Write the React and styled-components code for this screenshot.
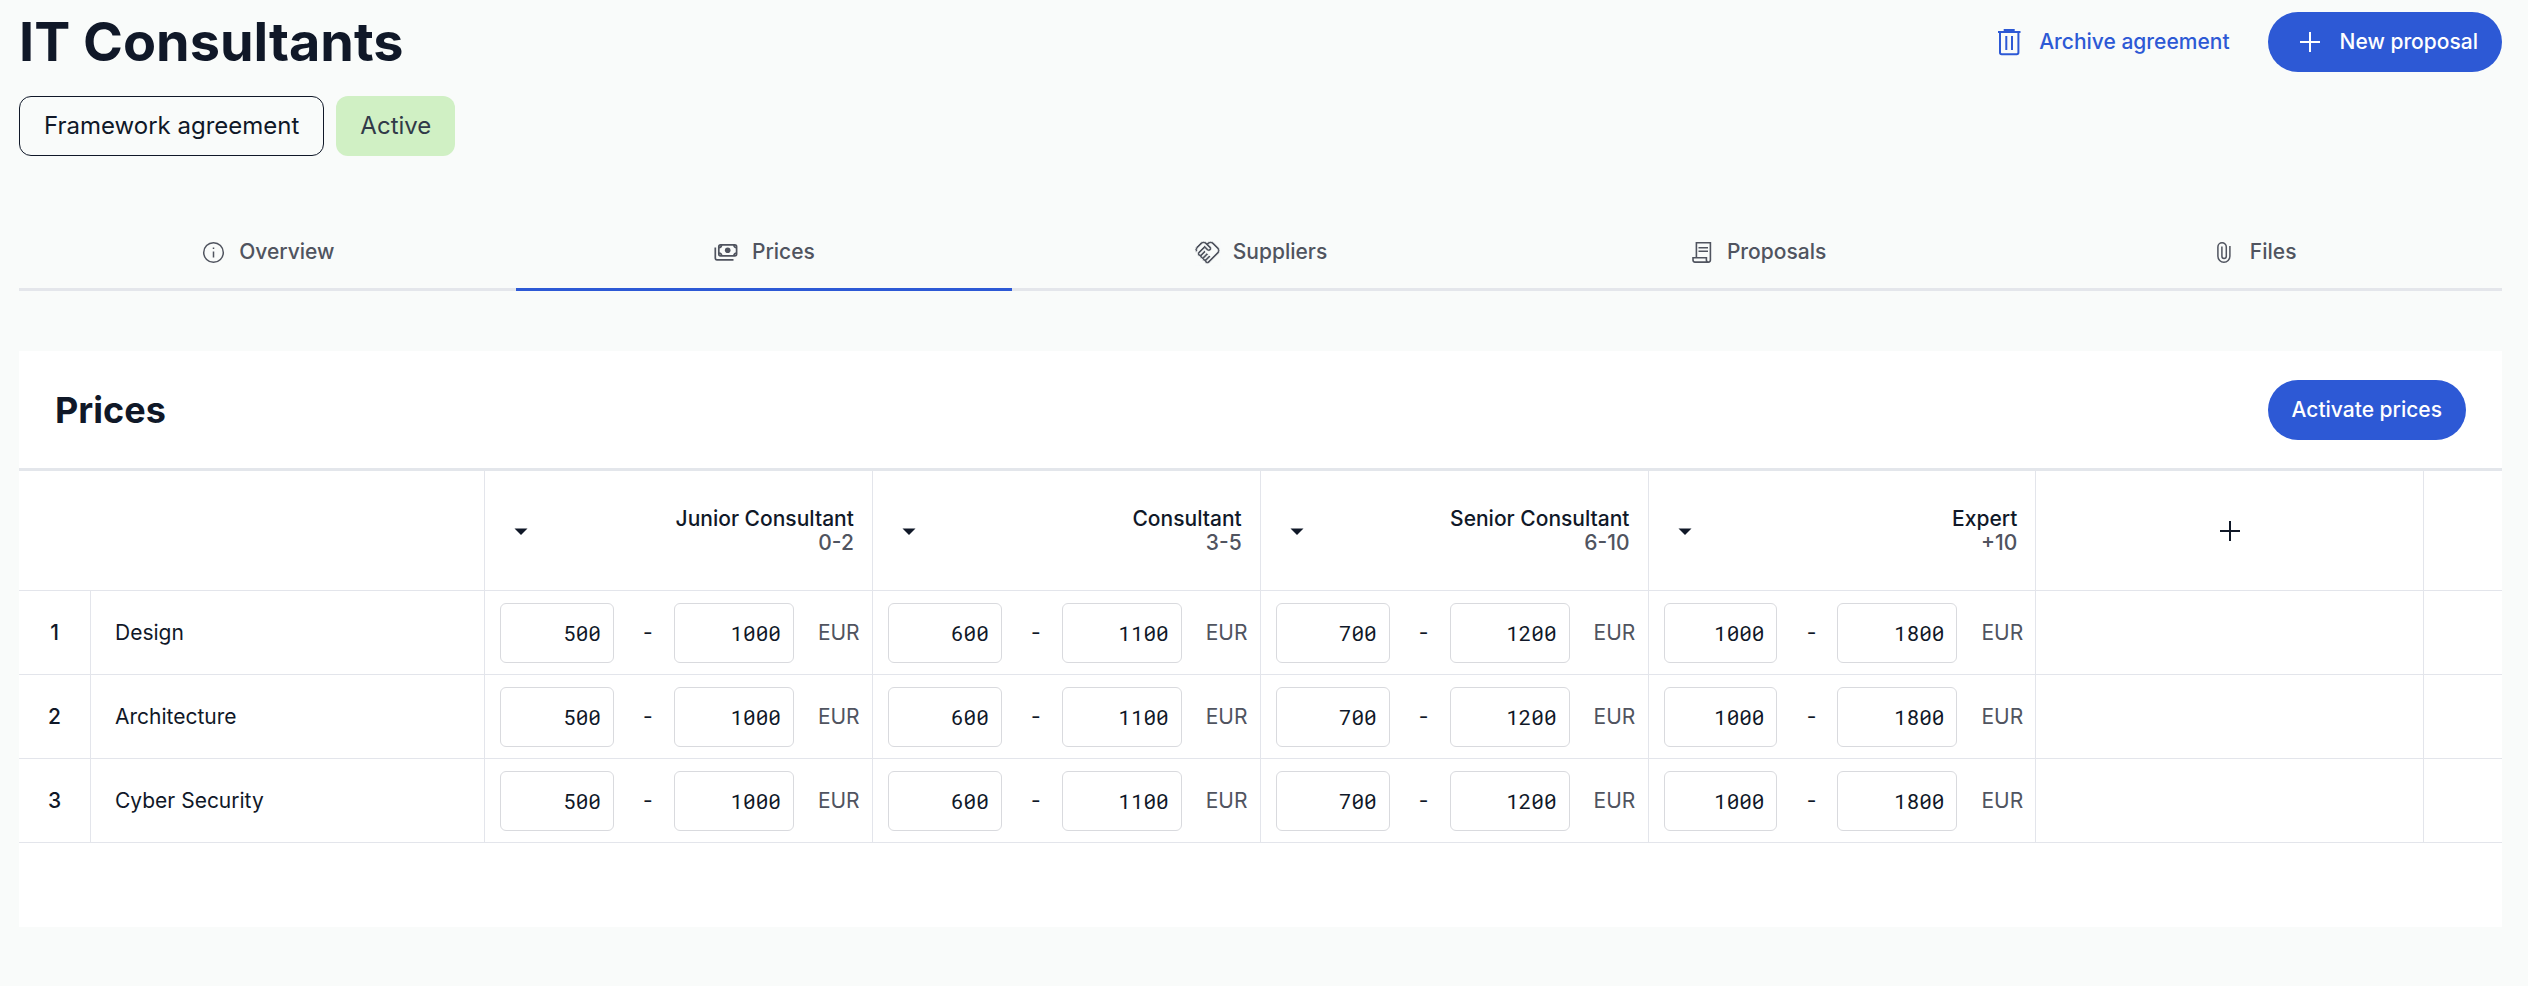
import { useState } from "react";
import styled, { createGlobalStyle } from "styled-components";
import { MdOutlineHandshake } from "react-icons/md";

const GlobalStyle = createGlobalStyle`
  * {
    box-sizing: border-box;
  }

  body {
    margin: 0;
    background-color: #f9fbfa;
    color: #101828;
    font-family: Inter, "Liberation Sans", sans-serif;
    font-size: 21px;
    line-height: 24px;
  }
`;

const Container = styled.main`
  display: flex;
  flex-direction: column;
  padding: 12px 26px 48px 19px;
`;

const Header = styled.header`
  display: flex;
  justify-content: space-between;
  align-items: center;
`;

const Title = styled.h1`
  margin: 0;
  font-size: 54px;
  line-height: 60px;
  font-weight: 700;
`;

const Actions = styled.div`
  display: flex;
  gap: 14px;
`;

const Button = styled.button`
  display: flex;
  align-items: center;
  gap: 12px;
  height: 60px;
  padding: 0 24px;
  border: none;
  border-radius: 30px;
  background-color: ${(p) => (p.$primary ? "#2d59d5" : "transparent")};
  color: ${(p) => (p.$primary ? "#ffffff" : "#2d59d5")};
  font: inherit;
  font-weight: 500;
  cursor: pointer;
`;

const Tags = styled.div`
  display: flex;
  gap: 12px;
  margin-top: 24px;
`;

const Tag = styled.span`
  display: flex;
  align-items: center;
  height: 60px;
  padding: 0 24px;
  border: ${(p) => (p.$active ? "none" : "1px solid #101828")};
  border-radius: 12px;
  background-color: ${(p) => (p.$active ? "#d0f0c4" : "transparent")};
  color: ${(p) => (p.$active ? "#303a48" : "#101828")};
  font-size: 24px;
`;

const Tabs = styled.nav`
  display: flex;
  margin: 60px 0;
`;

const Tab = styled.a`
  flex: 1;
  display: flex;
  justify-content: center;
  align-items: center;
  gap: 12px;
  height: 75px;
  border-bottom: 3px solid ${(p) => (p.$active ? "#2d59d5" : "#e4e6eb")};
  color: #50545f;
  font-weight: 500;
  text-decoration: none;
`;

const Card = styled.section`
  padding-bottom: 84px;
  background-color: #ffffff;
`;

const CardHeader = styled.div`
  display: flex;
  justify-content: space-between;
  align-items: center;
  padding: 29px 36px 28px;
  border-bottom: 3px solid #e3e6eb;
`;

const CardTitle = styled.h2`
  margin: 0;
  font-size: 36px;
  line-height: 48px;
  font-weight: 700;
`;

const Table = styled.table`
  width: 100%;
  table-layout: fixed;
  border-collapse: separate;
  border-spacing: 0;
`;

const Col = styled.col`
  width: ${(p) => p.$width};
`;

const HeadCell = styled.th`
  height: 120px;
  padding: 0 18px;
  border-right: 1px solid #e3e5eb;
  border-bottom: 1px solid #e3e5eb;
  font-weight: 500;

  &:last-child {
    border-right: none;
  }
`;

const Level = styled.div`
  display: flex;
  justify-content: space-between;
  align-items: center;
  text-align: right;
`;

const LevelYears = styled.div`
  color: #50545f;
`;

const IconButton = styled.button`
  display: inline-flex;
  padding: 0;
  border: none;
  background: none;
  color: inherit;
  vertical-align: middle;
  cursor: pointer;
`;

const Cell = styled.td`
  height: 84px;
  padding: 0;
  border-right: 1px solid #e3e5eb;
  border-bottom: 1px solid #e3e5eb;

  &:last-child {
    border-right: none;
  }
`;

const NumberCell = styled(Cell)`
  text-align: center;
  font-weight: 500;
`;

const NameCell = styled(Cell).attrs({ as: "th", scope: "row" })`
  padding-left: 24px;
  text-align: left;
  font-weight: 400;
`;

const Range = styled.div`
  display: grid;
  grid-template-columns: 114fr 60fr 120fr 78fr;
  align-items: center;
  padding-left: 15px;
`;

const PriceInput = styled.input`
  width: 100%;
  min-width: 0;
  height: 60px;
  padding: 0 12px;
  border: 1px solid #d9dade;
  border-radius: 6px;
  background-color: #ffffff;
  color: #101828;
  font-family: "Roboto Mono", "Noto Sans Mono", monospace;
  font-size: 21px;
  text-align: right;
`;

const Dash = styled.span`
  padding-left: 8px;
  text-align: center;
`;

const Currency = styled.span`
  padding-left: 24px;
  color: #50545f;
`;

const Svg = styled.svg`
  flex: none;
  fill: none;
  stroke: currentColor;
`;

function TrashIcon() {
  return (
    <Svg width="36" height="36" viewBox="0 0 36 36" strokeWidth="2">
      <path d="M7 8h22.500M13.700 7.500V6h9v1.500M9 8v20.500c0 1 .7 1.700 1.700 1.700h15c1 0 1.700-.7 1.700-1.700V8M15.300 12v14M21 12v14" />
    </Svg>
  );
}

function PlusIcon() {
  return (
    <Svg width="36" height="36" viewBox="0 0 36 36" strokeWidth="2">
      <path d="M18 8v20M8 18h20" />
    </Svg>
  );
}

function CaretIcon() {
  return (
    <Svg width="36" height="36" viewBox="0 0 36 36">
      <path d="M11.500 15.500h13L18 22z" fill="currentColor" stroke="none" />
    </Svg>
  );
}

function InfoIcon() {
  return (
    <Svg width="27" height="27" viewBox="0 0 27 27" strokeWidth="1.500">
      <circle cx="13.500" cy="13.500" r="9.800" />
      <path d="M13.500 12.500v6M13.500 8.500v1.600" />
    </Svg>
  );
}

function MoneyIcon() {
  return (
    <Svg width="27" height="27" viewBox="0 0 27 27" strokeWidth="1.700">
      <rect x="5.800" y="5.800" width="17.800" height="11" rx="1.800" />
      <path d="M5.800 8.600a2.800 2.800 0 0 0 2.800-2.800M20.800 5.800a2.800 2.800 0 0 0 2.800 2.800M5.800 14a2.800 2.800 0 0 1 2.800 2.800M20.800 16.800a2.800 2.800 0 0 1 2.800-2.800" />
      <circle cx="14.700" cy="11.300" r="2.800" fill="currentColor" stroke="none" />
      <path d="M2.300 8.500v10.600c0 1 .7 1.700 1.700 1.700h16.500" />
    </Svg>
  );
}

function ReceiptIcon() {
  return (
    <Svg width="27" height="27" viewBox="0 0 27 27" strokeWidth="1.600">
      <path d="M8.400 18.800V3.800h14v17.300a2 2 0 0 1-2 2H7a2 2 0 0 1-2-2v-2.300h13.400v2.300a2 2 0 0 0 2 2M10.500 8.700h9.500M10.500 12.300h9.500" />
    </Svg>
  );
}

function ClipIcon() {
  return (
    <Svg width="27" height="27" viewBox="0 0 27 27" strokeWidth="1.500">
      <path d="M18.900 7v10.200a6 6 0 0 1-12 0V8a4.200 4.200 0 0 1 8.400 0v9.200a2.200 2.200 0 0 1-4.400 0V7.500" />
    </Svg>
  );
}

// page-coloured stroke thins the solid glyph down to the weight of the other icons
function SuppliersIcon() {
  return <MdOutlineHandshake size={27} stroke="#f9fbfa" strokeWidth="0.700" />;
}

const tabs = [
  { name: "Overview", Icon: InfoIcon },
  { name: "Prices", Icon: MoneyIcon },
  { name: "Suppliers", Icon: SuppliersIcon },
  { name: "Proposals", Icon: ReceiptIcon },
  { name: "Files", Icon: ClipIcon },
];

const levels = [
  { name: "Junior Consultant", years: "0-2", min: 500, max: 1000 },
  { name: "Consultant", years: "3-5", min: 600, max: 1100 },
  { name: "Senior Consultant", years: "6-10", min: 700, max: 1200 },
  { name: "Expert", years: "+10", min: 1000, max: 1800 },
];

const roles = ["Design", "Architecture", "Cyber Security"];

function PriceRange({ label, min, max }) {
  const [from, setFrom] = useState(min);
  const [to, setTo] = useState(max);

  return (
    <Range>
      <PriceInput
        inputMode="numeric"
        aria-label={`${label} minimum price`}
        value={from}
        onChange={(e) => setFrom(e.target.value)}
      />
      <Dash>-</Dash>
      <PriceInput
        inputMode="numeric"
        aria-label={`${label} maximum price`}
        value={to}
        onChange={(e) => setTo(e.target.value)}
      />
      <Currency>EUR</Currency>
    </Range>
  );
}

function App() {
  const [activeTab, setActiveTab] = useState("Prices");

  return (
    <Container>
      <GlobalStyle />
      <Header>
        <Title>IT Consultants</Title>
        <Actions>
          <Button type="button">
            <TrashIcon />
            Archive agreement
          </Button>
          <Button type="button" $primary>
            <PlusIcon />
            New proposal
          </Button>
        </Actions>
      </Header>
      <Tags>
        <Tag>Framework agreement</Tag>
        <Tag $active>Active</Tag>
      </Tags>
      <Tabs>
        {tabs.map(({ name, Icon }) => (
          <Tab
            key={name}
            href={`#${name.toLowerCase()}`}
            $active={name === activeTab}
            onClick={() => setActiveTab(name)}
          >
            <Icon />
            {name}
          </Tab>
        ))}
      </Tabs>
      <Card>
        <CardHeader>
          <CardTitle>Prices</CardTitle>
          <Button type="button" $primary>
            Activate prices
          </Button>
        </CardHeader>
        <Table>
          <colgroup>
            <Col $width="72px" />
            <Col $width="394px" />
            {levels.map((level) => (
              <Col key={level.name} $width="15.62%" />
            ))}
            <Col $width="15.62%" />
            <Col />
          </colgroup>
          <thead>
            <tr>
              <HeadCell colSpan={2} />
              {levels.map((level) => (
                <HeadCell key={level.name} scope="col">
                  <Level>
                    <IconButton type="button" aria-label={`${level.name} options`}>
                      <CaretIcon />
                    </IconButton>
                    <div>
                      <div>{level.name}</div>
                      <LevelYears>{level.years}</LevelYears>
                    </div>
                  </Level>
                </HeadCell>
              ))}
              <HeadCell>
                <IconButton type="button" aria-label="Add level">
                  <PlusIcon />
                </IconButton>
              </HeadCell>
              <HeadCell />
            </tr>
          </thead>
          <tbody>
            {roles.map((role, i) => (
              <tr key={role}>
                <NumberCell>{i + 1}</NumberCell>
                <NameCell>{role}</NameCell>
                {levels.map((level) => (
                  <Cell key={level.name}>
                    <PriceRange
                      label={`${role}, ${level.name}`}
                      min={level.min}
                      max={level.max}
                    />
                  </Cell>
                ))}
                <Cell />
                <Cell />
              </tr>
            ))}
          </tbody>
        </Table>
      </Card>
    </Container>
  );
}

export default App;
